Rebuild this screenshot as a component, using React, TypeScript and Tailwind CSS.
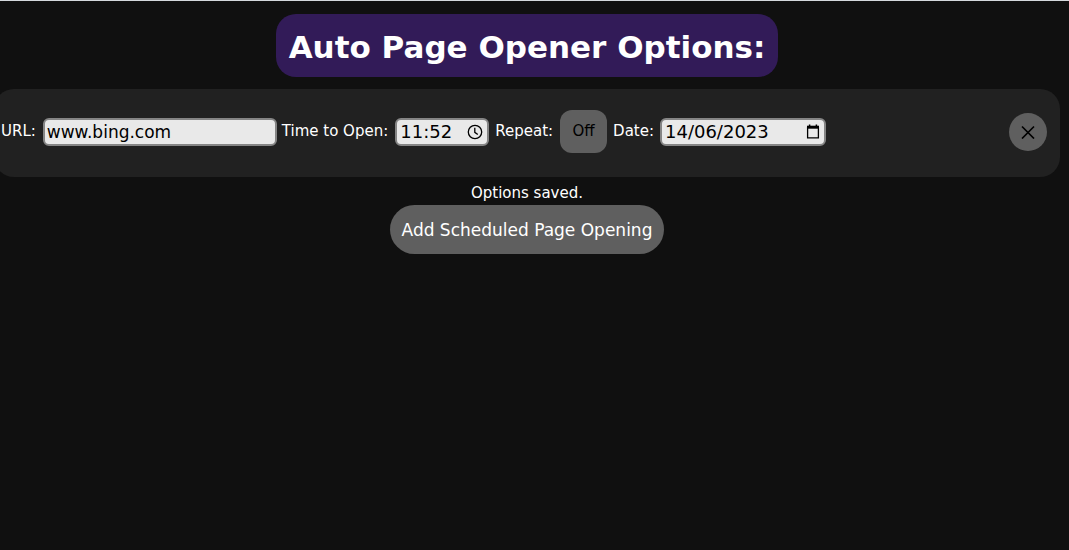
import React, { useState } from "react";

const fieldBox =
  "flex items-center rounded-md border-2 border-[#858585] bg-[#e9e9e9] text-black";

function ClockIcon() {
  return (
    <svg viewBox="0 0 16 16" className="size-4" fill="none" stroke="currentColor" strokeWidth="1.3">
      <circle cx="8" cy="8" r="6.7" />
      <path d="M7.8 3.8v4.5l3 2.2" />
    </svg>
  );
}

function CalendarIcon() {
  return (
    <svg viewBox="0 0 14 16" className="h-4 w-3.5" fill="none" stroke="currentColor">
      <path d="M1.6 3v10.9h10.8V3" strokeWidth="1.3" />
      <path d="M1 3.2h12" strokeWidth="3" />
      <path d="M3.6 .5v2M10.4 .5v2" strokeWidth="1.5" />
    </svg>
  );
}

export default function App() {
  const [url, setUrl] = useState("www.bing.com");
  const [time, setTime] = useState("11:52");
  const [date, setDate] = useState("14/06/2023");
  const [repeat, setRepeat] = useState(false);

  return (
    <div className="min-h-screen overflow-x-hidden border-t border-[#d5d9dd] bg-[#101010] font-['DejaVu_Sans',Verdana,sans-serif] text-white">
      {/* The content runs slightly past the left edge */}
      <main className="-ml-1.5 mr-[9px] flex flex-col items-center pt-[13px]">
        <h1 className="rounded-[20px] bg-[#321b58] px-[13px] pt-3.5 pb-2.5 text-[31px] leading-[39px] font-bold whitespace-nowrap">
          Auto Page Opener Options:
        </h1>

        <form
          className="mt-3 flex h-[88px] w-full items-center rounded-[20px] bg-[#212121] pr-[13px] pb-[3px] pl-[7px] text-[15px] whitespace-nowrap"
          onSubmit={(e) => e.preventDefault()}
        >
          <label htmlFor="url">URL:</label>
          <input
            id="url"
            type="text"
            value={url}
            onChange={(e) => setUrl(e.target.value)}
            className={`${fieldBox} mr-[5px] ml-[7px] h-7 w-[234px] px-0.5 text-[17px]`}
          />

          <label htmlFor="time">Time to Open:</label>
          <div className={`${fieldBox} mr-1.5 ml-[7px] h-7 w-[94px] pr-1 pl-[3px]`}>
            <input
              id="time"
              type="text"
              value={time}
              onChange={(e) => setTime(e.target.value)}
              className="w-0 flex-1 text-[18px] outline-none"
            />
            <button type="button" aria-label="Pick time">
              <ClockIcon />
            </button>
          </div>

          <label htmlFor="repeat">Repeat:</label>
          <button
            id="repeat"
            type="button"
            onClick={() => setRepeat(!repeat)}
            className="mr-1.5 ml-[7px] h-[43px] w-[47px] rounded-xl bg-[#5f5f5f] text-black"
          >
            {repeat ? "On" : "Off"}
          </button>

          <label htmlFor="date">Date:</label>
          <div className={`${fieldBox} ml-1.5 h-7 w-[166px] pr-1 pl-[3px]`}>
            <input
              id="date"
              type="text"
              value={date}
              onChange={(e) => setDate(e.target.value)}
              className="w-0 flex-1 text-[18px] outline-none"
            />
            <button type="button" aria-label="Pick date">
              <CalendarIcon />
            </button>
          </div>

          <button
            type="button"
            aria-label="Remove"
            className="ml-auto flex size-[38px] items-center justify-center rounded-full bg-[#5f5f5f] text-black"
          >
            <svg viewBox="0 0 14 14" className="size-3.5" fill="none" stroke="currentColor" strokeWidth="1.7">
              <path d="M1 1.5l12 12M13 1.5l-12 12" />
            </svg>
          </button>
        </form>

        <p className="pt-1 text-[15px] leading-6">Options saved.</p>
        <button
          type="button"
          className="h-[49px] rounded-full bg-[#5f5f5f] px-3 pt-0.5 text-[17px] whitespace-nowrap"
        >
          Add Scheduled Page Opening
        </button>
      </main>
    </div>
  );
}
